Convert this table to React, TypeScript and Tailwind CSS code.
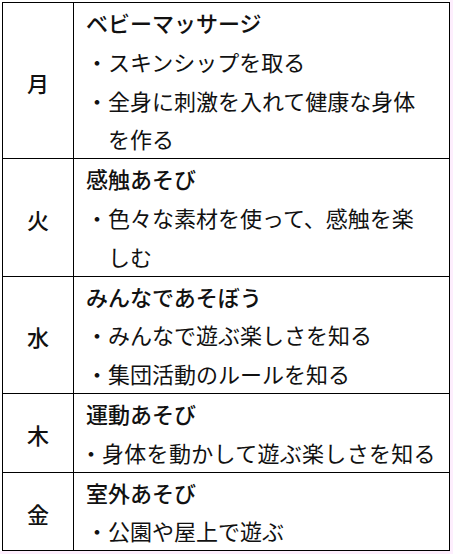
import React from "react";

type Item = { text: string; tight?: boolean };
type Day = { day: string; title: string; items: Item[] };

const days: Day[] = [
  {
    day: "月",
    title: "ベビーマッサージ",
    items: [{ text: "スキンシップを取る" }, { text: "全身に刺激を入れて健康な身体を作る" }],
  },
  {
    day: "火",
    title: "感触あそび",
    items: [{ text: "色々な素材を使って、感触を楽しむ" }],
  },
  {
    day: "水",
    title: "みんなであそぼう",
    items: [{ text: "みんなで遊ぶ楽しさを知る" }, { text: "集団活動のルールを知る" }],
  },
  {
    day: "木",
    title: "運動あそび",
    items: [{ text: "身体を動かして遊ぶ楽しさを知る", tight: true }],
  },
  {
    day: "金",
    title: "室外あそび",
    items: [{ text: "公園や屋上で遊ぶ" }],
  },
];

export default function App() {
  return (
    <div className="w-[453px] h-[554px] bg-[#fdeefd]">
      <div
        className="w-[450px] h-[551px] bg-white pt-[2px] pl-[2px] text-[22px] leading-[38.8px] text-[#111]"
        style={{ fontFamily: '"Noto Sans CJK JP", "Noto Sans", sans-serif' }}
      >
        <div className="w-[448px] border border-black">
          {days.map((d, i) => (
            <div key={d.day} className={`flex ${i > 0 ? "border-t border-black" : ""}`}>
              <div className="w-[71px] shrink-0 border-r border-black flex items-center justify-center font-medium pt-[4px]">
                {d.day}
              </div>
              <div className="flex-1 min-w-0 pl-[12px] pr-[14px]">
                <div className="font-medium">{d.title}</div>
                {d.items.map((it) => (
                  <div
                    key={it.text}
                    className={`flex ${it.tight ? "-ml-[6px] -mr-[8px] whitespace-nowrap tracking-[0.3px]" : ""}`}
                  >
                    <span className="w-[22px] shrink-0">・</span>
                    <span className="min-w-0">{it.text}</span>
                  </div>
                ))}
              </div>
            </div>
          ))}
        </div>
      </div>
    </div>
  );
}
